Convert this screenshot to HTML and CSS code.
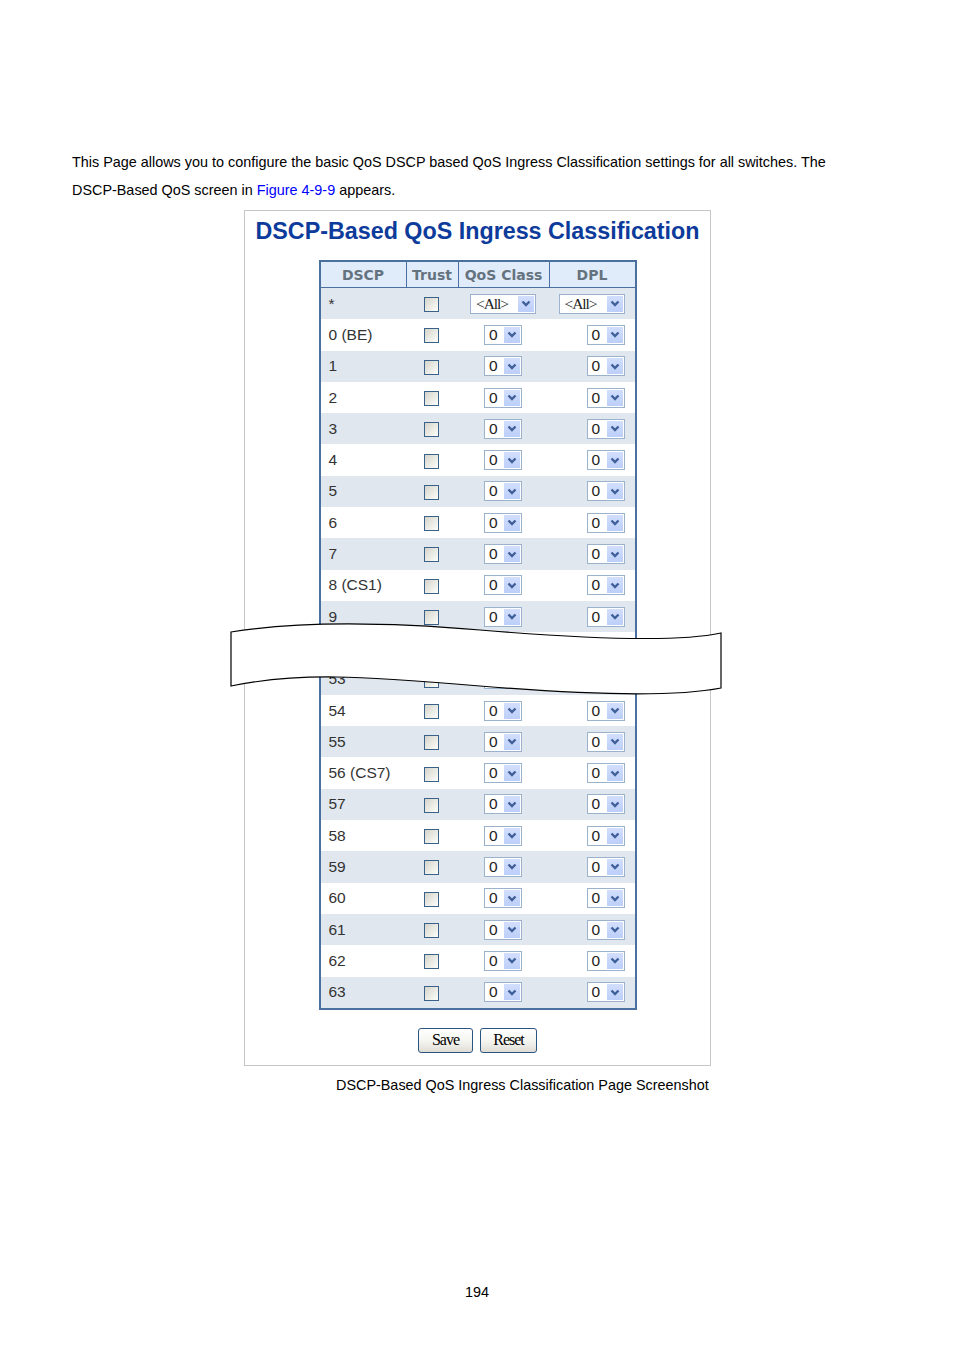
FILE: index.html
```html
<!DOCTYPE html>
<html>
<head>
<meta charset="utf-8">
<link rel="stylesheet" href="styles.css">
</head>
<body>
<div class="page">
  <p class="intro">This Page allows you to configure the basic QoS DSCP based QoS Ingress Classification settings for all switches. The DSCP-Based QoS screen in <span class="ref">Figure 4-9-9</span> appears.</p>

  <div class="shot">
    <h1 class="title">DSCP-Based QoS Ingress Classification</h1>
    <table class="grid">
      <thead>
        <tr><th class="c1">DSCP</th><th class="c2">Trust</th><th class="c3">QoS Class</th><th class="c4">DPL</th></tr>
      </thead>
      <tbody>
        <tr><td class="name">*</td><td class="chk"><span class="box"></span></td><td class="qos"><span class="sel wide"><span class="v all">&lt;All&gt;</span><span class="btn"><svg width="10" height="7" viewBox="0 0 10 7"><polyline points="1.5,1.5 5,5 8.5,1.5" fill="none" stroke="#40609a" stroke-width="2.4"/></svg></span></span></td><td class="dpl"><span class="sel wide"><span class="v all">&lt;All&gt;</span><span class="btn"><svg width="10" height="7" viewBox="0 0 10 7"><polyline points="1.5,1.5 5,5 8.5,1.5" fill="none" stroke="#40609a" stroke-width="2.4"/></svg></span></span></td></tr>
        <tr><td class="name">0 (BE)</td><td class="chk"><span class="box"></span></td><td class="qos"><span class="sel"><span class="v">0</span><span class="btn"><svg width="10" height="7" viewBox="0 0 10 7"><polyline points="1.5,1.5 5,5 8.5,1.5" fill="none" stroke="#40609a" stroke-width="2.4"/></svg></span></span></td><td class="dpl"><span class="sel"><span class="v">0</span><span class="btn"><svg width="10" height="7" viewBox="0 0 10 7"><polyline points="1.5,1.5 5,5 8.5,1.5" fill="none" stroke="#40609a" stroke-width="2.4"/></svg></span></span></td></tr>
        <tr><td class="name">1</td><td class="chk"><span class="box"></span></td><td class="qos"><span class="sel"><span class="v">0</span><span class="btn"><svg width="10" height="7" viewBox="0 0 10 7"><polyline points="1.5,1.5 5,5 8.5,1.5" fill="none" stroke="#40609a" stroke-width="2.4"/></svg></span></span></td><td class="dpl"><span class="sel"><span class="v">0</span><span class="btn"><svg width="10" height="7" viewBox="0 0 10 7"><polyline points="1.5,1.5 5,5 8.5,1.5" fill="none" stroke="#40609a" stroke-width="2.4"/></svg></span></span></td></tr>
        <tr><td class="name">2</td><td class="chk"><span class="box"></span></td><td class="qos"><span class="sel"><span class="v">0</span><span class="btn"><svg width="10" height="7" viewBox="0 0 10 7"><polyline points="1.5,1.5 5,5 8.5,1.5" fill="none" stroke="#40609a" stroke-width="2.4"/></svg></span></span></td><td class="dpl"><span class="sel"><span class="v">0</span><span class="btn"><svg width="10" height="7" viewBox="0 0 10 7"><polyline points="1.5,1.5 5,5 8.5,1.5" fill="none" stroke="#40609a" stroke-width="2.4"/></svg></span></span></td></tr>
        <tr><td class="name">3</td><td class="chk"><span class="box"></span></td><td class="qos"><span class="sel"><span class="v">0</span><span class="btn"><svg width="10" height="7" viewBox="0 0 10 7"><polyline points="1.5,1.5 5,5 8.5,1.5" fill="none" stroke="#40609a" stroke-width="2.4"/></svg></span></span></td><td class="dpl"><span class="sel"><span class="v">0</span><span class="btn"><svg width="10" height="7" viewBox="0 0 10 7"><polyline points="1.5,1.5 5,5 8.5,1.5" fill="none" stroke="#40609a" stroke-width="2.4"/></svg></span></span></td></tr>
        <tr><td class="name">4</td><td class="chk"><span class="box"></span></td><td class="qos"><span class="sel"><span class="v">0</span><span class="btn"><svg width="10" height="7" viewBox="0 0 10 7"><polyline points="1.5,1.5 5,5 8.5,1.5" fill="none" stroke="#40609a" stroke-width="2.4"/></svg></span></span></td><td class="dpl"><span class="sel"><span class="v">0</span><span class="btn"><svg width="10" height="7" viewBox="0 0 10 7"><polyline points="1.5,1.5 5,5 8.5,1.5" fill="none" stroke="#40609a" stroke-width="2.4"/></svg></span></span></td></tr>
        <tr><td class="name">5</td><td class="chk"><span class="box"></span></td><td class="qos"><span class="sel"><span class="v">0</span><span class="btn"><svg width="10" height="7" viewBox="0 0 10 7"><polyline points="1.5,1.5 5,5 8.5,1.5" fill="none" stroke="#40609a" stroke-width="2.4"/></svg></span></span></td><td class="dpl"><span class="sel"><span class="v">0</span><span class="btn"><svg width="10" height="7" viewBox="0 0 10 7"><polyline points="1.5,1.5 5,5 8.5,1.5" fill="none" stroke="#40609a" stroke-width="2.4"/></svg></span></span></td></tr>
        <tr><td class="name">6</td><td class="chk"><span class="box"></span></td><td class="qos"><span class="sel"><span class="v">0</span><span class="btn"><svg width="10" height="7" viewBox="0 0 10 7"><polyline points="1.5,1.5 5,5 8.5,1.5" fill="none" stroke="#40609a" stroke-width="2.4"/></svg></span></span></td><td class="dpl"><span class="sel"><span class="v">0</span><span class="btn"><svg width="10" height="7" viewBox="0 0 10 7"><polyline points="1.5,1.5 5,5 8.5,1.5" fill="none" stroke="#40609a" stroke-width="2.4"/></svg></span></span></td></tr>
        <tr><td class="name">7</td><td class="chk"><span class="box"></span></td><td class="qos"><span class="sel"><span class="v">0</span><span class="btn"><svg width="10" height="7" viewBox="0 0 10 7"><polyline points="1.5,1.5 5,5 8.5,1.5" fill="none" stroke="#40609a" stroke-width="2.4"/></svg></span></span></td><td class="dpl"><span class="sel"><span class="v">0</span><span class="btn"><svg width="10" height="7" viewBox="0 0 10 7"><polyline points="1.5,1.5 5,5 8.5,1.5" fill="none" stroke="#40609a" stroke-width="2.4"/></svg></span></span></td></tr>
        <tr><td class="name">8 (CS1)</td><td class="chk"><span class="box"></span></td><td class="qos"><span class="sel"><span class="v">0</span><span class="btn"><svg width="10" height="7" viewBox="0 0 10 7"><polyline points="1.5,1.5 5,5 8.5,1.5" fill="none" stroke="#40609a" stroke-width="2.4"/></svg></span></span></td><td class="dpl"><span class="sel"><span class="v">0</span><span class="btn"><svg width="10" height="7" viewBox="0 0 10 7"><polyline points="1.5,1.5 5,5 8.5,1.5" fill="none" stroke="#40609a" stroke-width="2.4"/></svg></span></span></td></tr>
        <tr><td class="name">9</td><td class="chk"><span class="box"></span></td><td class="qos"><span class="sel"><span class="v">0</span><span class="btn"><svg width="10" height="7" viewBox="0 0 10 7"><polyline points="1.5,1.5 5,5 8.5,1.5" fill="none" stroke="#40609a" stroke-width="2.4"/></svg></span></span></td><td class="dpl"><span class="sel"><span class="v">0</span><span class="btn"><svg width="10" height="7" viewBox="0 0 10 7"><polyline points="1.5,1.5 5,5 8.5,1.5" fill="none" stroke="#40609a" stroke-width="2.4"/></svg></span></span></td></tr>
        <tr><td class="name">10</td><td class="chk"><span class="box"></span></td><td class="qos"><span class="sel"><span class="v">0</span><span class="btn"><svg width="10" height="7" viewBox="0 0 10 7"><polyline points="1.5,1.5 5,5 8.5,1.5" fill="none" stroke="#40609a" stroke-width="2.4"/></svg></span></span></td><td class="dpl"><span class="sel"><span class="v">0</span><span class="btn"><svg width="10" height="7" viewBox="0 0 10 7"><polyline points="1.5,1.5 5,5 8.5,1.5" fill="none" stroke="#40609a" stroke-width="2.4"/></svg></span></span></td></tr>
        <tr><td class="name">53</td><td class="chk"><span class="box"></span></td><td class="qos"><span class="sel"><span class="v">0</span><span class="btn"><svg width="10" height="7" viewBox="0 0 10 7"><polyline points="1.5,1.5 5,5 8.5,1.5" fill="none" stroke="#40609a" stroke-width="2.4"/></svg></span></span></td><td class="dpl"><span class="sel"><span class="v">0</span><span class="btn"><svg width="10" height="7" viewBox="0 0 10 7"><polyline points="1.5,1.5 5,5 8.5,1.5" fill="none" stroke="#40609a" stroke-width="2.4"/></svg></span></span></td></tr>
        <tr><td class="name">54</td><td class="chk"><span class="box"></span></td><td class="qos"><span class="sel"><span class="v">0</span><span class="btn"><svg width="10" height="7" viewBox="0 0 10 7"><polyline points="1.5,1.5 5,5 8.5,1.5" fill="none" stroke="#40609a" stroke-width="2.4"/></svg></span></span></td><td class="dpl"><span class="sel"><span class="v">0</span><span class="btn"><svg width="10" height="7" viewBox="0 0 10 7"><polyline points="1.5,1.5 5,5 8.5,1.5" fill="none" stroke="#40609a" stroke-width="2.4"/></svg></span></span></td></tr>
        <tr><td class="name">55</td><td class="chk"><span class="box"></span></td><td class="qos"><span class="sel"><span class="v">0</span><span class="btn"><svg width="10" height="7" viewBox="0 0 10 7"><polyline points="1.5,1.5 5,5 8.5,1.5" fill="none" stroke="#40609a" stroke-width="2.4"/></svg></span></span></td><td class="dpl"><span class="sel"><span class="v">0</span><span class="btn"><svg width="10" height="7" viewBox="0 0 10 7"><polyline points="1.5,1.5 5,5 8.5,1.5" fill="none" stroke="#40609a" stroke-width="2.4"/></svg></span></span></td></tr>
        <tr><td class="name">56 (CS7)</td><td class="chk"><span class="box"></span></td><td class="qos"><span class="sel"><span class="v">0</span><span class="btn"><svg width="10" height="7" viewBox="0 0 10 7"><polyline points="1.5,1.5 5,5 8.5,1.5" fill="none" stroke="#40609a" stroke-width="2.4"/></svg></span></span></td><td class="dpl"><span class="sel"><span class="v">0</span><span class="btn"><svg width="10" height="7" viewBox="0 0 10 7"><polyline points="1.5,1.5 5,5 8.5,1.5" fill="none" stroke="#40609a" stroke-width="2.4"/></svg></span></span></td></tr>
        <tr><td class="name">57</td><td class="chk"><span class="box"></span></td><td class="qos"><span class="sel"><span class="v">0</span><span class="btn"><svg width="10" height="7" viewBox="0 0 10 7"><polyline points="1.5,1.5 5,5 8.5,1.5" fill="none" stroke="#40609a" stroke-width="2.4"/></svg></span></span></td><td class="dpl"><span class="sel"><span class="v">0</span><span class="btn"><svg width="10" height="7" viewBox="0 0 10 7"><polyline points="1.5,1.5 5,5 8.5,1.5" fill="none" stroke="#40609a" stroke-width="2.4"/></svg></span></span></td></tr>
        <tr><td class="name">58</td><td class="chk"><span class="box"></span></td><td class="qos"><span class="sel"><span class="v">0</span><span class="btn"><svg width="10" height="7" viewBox="0 0 10 7"><polyline points="1.5,1.5 5,5 8.5,1.5" fill="none" stroke="#40609a" stroke-width="2.4"/></svg></span></span></td><td class="dpl"><span class="sel"><span class="v">0</span><span class="btn"><svg width="10" height="7" viewBox="0 0 10 7"><polyline points="1.5,1.5 5,5 8.5,1.5" fill="none" stroke="#40609a" stroke-width="2.4"/></svg></span></span></td></tr>
        <tr><td class="name">59</td><td class="chk"><span class="box"></span></td><td class="qos"><span class="sel"><span class="v">0</span><span class="btn"><svg width="10" height="7" viewBox="0 0 10 7"><polyline points="1.5,1.5 5,5 8.5,1.5" fill="none" stroke="#40609a" stroke-width="2.4"/></svg></span></span></td><td class="dpl"><span class="sel"><span class="v">0</span><span class="btn"><svg width="10" height="7" viewBox="0 0 10 7"><polyline points="1.5,1.5 5,5 8.5,1.5" fill="none" stroke="#40609a" stroke-width="2.4"/></svg></span></span></td></tr>
        <tr><td class="name">60</td><td class="chk"><span class="box"></span></td><td class="qos"><span class="sel"><span class="v">0</span><span class="btn"><svg width="10" height="7" viewBox="0 0 10 7"><polyline points="1.5,1.5 5,5 8.5,1.5" fill="none" stroke="#40609a" stroke-width="2.4"/></svg></span></span></td><td class="dpl"><span class="sel"><span class="v">0</span><span class="btn"><svg width="10" height="7" viewBox="0 0 10 7"><polyline points="1.5,1.5 5,5 8.5,1.5" fill="none" stroke="#40609a" stroke-width="2.4"/></svg></span></span></td></tr>
        <tr><td class="name">61</td><td class="chk"><span class="box"></span></td><td class="qos"><span class="sel"><span class="v">0</span><span class="btn"><svg width="10" height="7" viewBox="0 0 10 7"><polyline points="1.5,1.5 5,5 8.5,1.5" fill="none" stroke="#40609a" stroke-width="2.4"/></svg></span></span></td><td class="dpl"><span class="sel"><span class="v">0</span><span class="btn"><svg width="10" height="7" viewBox="0 0 10 7"><polyline points="1.5,1.5 5,5 8.5,1.5" fill="none" stroke="#40609a" stroke-width="2.4"/></svg></span></span></td></tr>
        <tr><td class="name">62</td><td class="chk"><span class="box"></span></td><td class="qos"><span class="sel"><span class="v">0</span><span class="btn"><svg width="10" height="7" viewBox="0 0 10 7"><polyline points="1.5,1.5 5,5 8.5,1.5" fill="none" stroke="#40609a" stroke-width="2.4"/></svg></span></span></td><td class="dpl"><span class="sel"><span class="v">0</span><span class="btn"><svg width="10" height="7" viewBox="0 0 10 7"><polyline points="1.5,1.5 5,5 8.5,1.5" fill="none" stroke="#40609a" stroke-width="2.4"/></svg></span></span></td></tr>
        <tr><td class="name">63</td><td class="chk"><span class="box"></span></td><td class="qos"><span class="sel"><span class="v">0</span><span class="btn"><svg width="10" height="7" viewBox="0 0 10 7"><polyline points="1.5,1.5 5,5 8.5,1.5" fill="none" stroke="#40609a" stroke-width="2.4"/></svg></span></span></td><td class="dpl"><span class="sel"><span class="v">0</span><span class="btn"><svg width="10" height="7" viewBox="0 0 10 7"><polyline points="1.5,1.5 5,5 8.5,1.5" fill="none" stroke="#40609a" stroke-width="2.4"/></svg></span></span></td></tr>
      </tbody>
    </table>
    <div class="actions">
      <button class="act save" type="button">Save</button>
      <button class="act reset" type="button">Reset</button>
    </div>
    <svg class="tear" width="494" height="84" viewBox="229 617 494 84">
      <path d="M231 632 C 280 624, 360 620, 480 630 S 680 642, 721 633 L 721 688 C 680 696, 600 696, 480 686 S 300 672, 231 686 Z" fill="#fff" stroke="#000" stroke-width="1.2"/>
    </svg>
  </div>

  <p class="caption">DSCP-Based QoS Ingress Classification Page Screenshot</p>
  <p class="pagenum">194</p>
</div>
</body>
</html>
```

FILE: styles.css
```css
body {
  margin: 0;
  background: #fff;
  font-family: "Liberation Sans", Arial, sans-serif;
  color: #000;
}

.page {
  width: 954px;
}

.intro {
  margin: 148px 0 0 72px;
  width: 790px;
  font-size: 14.4px;
  line-height: 28px;
}

.ref {
  color: #0000ff;
}

.shot {
  position: relative;
  margin: 6px 0 0 244px;
  width: 465px;
  border: 1px solid #c6c6c6;
  padding: 6px 0 12px;
}

.title {
  margin: 0;
  font-size: 23.3px;
  line-height: 28px;
  font-weight: bold;
  color: #0d3b9b;
  text-align: center;
}

.grid {
  margin: 15px auto 0;
  width: 318px;
  table-layout: fixed;
  border-collapse: separate;
  border-spacing: 0;
  border: 2px solid #4a70a0;
  font-family: "Liberation Sans", Arial, sans-serif;
}

.grid th {
  box-sizing: border-box;
  height: 26px;
  padding: 0;
  background: #e1ecfa;
  border-bottom: 1px solid #4a70a0;
  font-family: "DejaVu Sans", Verdana, sans-serif;
  font-size: 14px;
  font-weight: bold;
  color: #65737f;
  text-align: center;
  white-space: nowrap;
}

.grid th + th {
  border-left: 1px solid #4a70a0;
}

.grid .c1 { width: 85px; }
.grid .c2 { width: 52px; }
.grid .c3 { width: 91px; }
.grid .c4 { width: 86px; }

.grid td {
  height: 31.3px;
  padding: 0;
  font-size: 15.5px;
  color: #333;
}

.grid tbody tr:nth-child(odd) td {
  background: #e0e7ef;
}

.grid .name {
  padding-left: 8px;
}

.grid .chk,
.grid .qos {
  text-align: center;
}

.grid .dpl {
  text-align: right;
  padding-right: 10px;
}

.box {
  display: inline-block;
  vertical-align: middle;
  width: 15px;
  height: 15px;
  box-sizing: border-box;
  border: 1px solid #3a6288;
  background: linear-gradient(135deg, #d4d4cc 0%, #ecece6 55%, #fdfdfb 100%);
}

.sel {
  display: inline-flex;
  vertical-align: middle;
  box-sizing: border-box;
  width: 38px;
  height: 20px;
  border: 1px solid #9ab2cc;
  background: #fff;
  text-align: left;
}

.sel.wide {
  width: 66px;
}

.sel .v {
  flex: 1;
  padding-left: 4px;
  font-size: 15.5px;
  line-height: 17px;
  color: #222;
}

.sel .v.all {
  font-family: "Liberation Serif", "Times New Roman", serif;
  font-size: 15.5px;
  letter-spacing: -1.1px;
  padding-left: 5px;
}

.sel .btn {
  display: flex;
  align-items: center;
  justify-content: center;
  width: 16px;
  margin: 1px;
  background: linear-gradient(180deg, #d2defd 0%, #bccff9 100%);
}

.actions {
  display: flex;
  justify-content: center;
  gap: 7px;
  margin-top: 18px;
}

.act {
  height: 25px;
  padding: 0;
  border: 1px solid #2a5482;
  border-radius: 3px;
  background: linear-gradient(180deg, #ffffff 0%, #f4f4ef 55%, #dedcd4 100%);
  font-family: "Liberation Serif", "Times New Roman", serif;
  font-size: 16px;
  letter-spacing: -1px;
  color: #000;
}

.act.save { width: 55px; }
.act.reset { width: 57px; }

.tear {
  position: absolute;
  left: -16px;
  top: 406px;
}

.caption {
  margin: 9px 0 0 336px;
  font-size: 14.4px;
  line-height: 20px;
}

.pagenum {
  margin: 187px 0 0;
  text-align: center;
  font-size: 14.4px;
  line-height: 20px;
}
```
